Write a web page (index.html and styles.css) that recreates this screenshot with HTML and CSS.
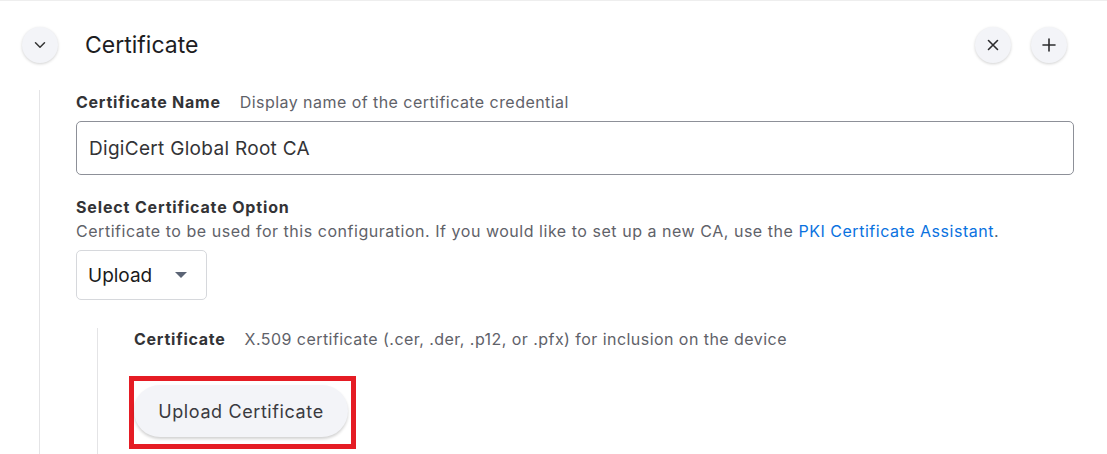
FILE: index.html
```html
<!DOCTYPE html>
<html lang="en">
<head>
<meta charset="utf-8">
<title>Certificate</title>
<link rel="stylesheet" href="styles.css">
</head>
<body>
<div class="page">
  <div class="header">
    <button class="circle-btn" aria-label="Collapse">
      <svg width="12" height="8" viewBox="0 0 12 8"><path d="M1.5 1.8 L6 6.2 L10.5 1.8" fill="none" stroke="#333" stroke-width="1.5" stroke-linecap="round" stroke-linejoin="round"/></svg>
    </button>
    <h1 class="title">Certificate</h1>
    <div class="actions">
      <button class="circle-btn" aria-label="Remove">
        <svg width="12" height="12" viewBox="0 0 12 12"><path d="M1.5 1.5 L10.5 10.5 M10.5 1.5 L1.5 10.5" fill="none" stroke="#2c2c2e" stroke-width="1.6" stroke-linecap="round"/></svg>
      </button>
      <button class="circle-btn" aria-label="Add">
        <svg width="14" height="14" viewBox="0 0 14 14"><path d="M7 1 V13 M1 7 H13" fill="none" stroke="#2c2c2e" stroke-width="1.6" stroke-linecap="round"/></svg>
      </button>
    </div>
  </div>
  <div class="body">
    <div class="field-head">
      <span class="label">Certificate Name</span>
      <span class="hint">Display name of the certificate credential</span>
    </div>
    <div class="text-input">DigiCert Global Root CA</div>

    <div class="label block-label">Select Certificate Option</div>
    <div class="desc">Certificate to be used for this configuration. If you would like to set up a new CA, use the <a href="#" class="link">PKI Certificate Assistant</a>.</div>
    <div class="select">
      <span class="select-value">Upload</span>
      <svg class="caret" width="12" height="6" viewBox="0 0 12 6"><path d="M0 0 H12 L6 6 Z" fill="#5b6475"/></svg>
    </div>

    <div class="nested">
      <div class="field-head">
        <span class="label">Certificate</span>
        <span class="hint">X.509 certificate (.cer, .der, .p12, or .pfx) for inclusion on the device</span>
      </div>
      <div class="highlight">
        <button class="pill-btn">Upload Certificate</button>
      </div>
    </div>
  </div>
</div>
</body>
</html>
```

FILE: styles.css
```css
* { box-sizing: border-box; }
html, body { margin: 0; padding: 0; background: #fff; }
body {
  font-family: Inter, "Open Sans", "Liberation Sans", sans-serif;
  color: #1d1d1f;
  height: 454px;
  overflow: hidden;
  border-top: 1px solid #eeeeee;
}
.page { width: 1107px; }
.header {
  display: flex;
  align-items: center;
  padding: 26px 40px 0 22px;
  height: 62px;
}
.circle-btn {
  width: 36px;
  height: 36px;
  border-radius: 50%;
  border: none;
  background: #f3f4f8;
  box-shadow: 0 1px 3px rgba(0,0,0,0.18);
  display: flex;
  align-items: center;
  justify-content: center;
  padding: 0;
  flex: none;
}
.title {
  margin: 0 0 0 27px;
  font-size: 23px;
  font-weight: 400;
  color: #1d1d1f;
  flex: 1;
  line-height: 30px;
}
.actions { display: flex; gap: 20px; }
.body {
  margin: 27px 0 0 39px;
  border-left: 1px solid #e4e4e6;
  padding: 2px 33px 0 36px;
}
.field-head { display: flex; align-items: baseline; gap: 19px; line-height: 20px; }
.label { font-size: 16px; font-weight: 700; color: #333336; letter-spacing: 0.75px; }
.hint { font-size: 16px; color: #5f6269; letter-spacing: 0.45px; }
.text-input {
  margin-top: 9px;
  height: 54px;
  border: 1px solid #8d9098;
  border-radius: 5px;
  padding: 0 12px;
  display: flex;
  align-items: center;
  font-size: 19px;
  color: #333336;
  letter-spacing: 0.3px;
}
.block-label { margin-top: 22px; line-height: 20px; letter-spacing: 0.85px; }
.desc { margin-top: 4px; font-size: 16px; line-height: 20px; color: #5f6269; letter-spacing: 0.53px; }
.link { color: #0a72e0; text-decoration: none; }
.select {
  margin-top: 9px;
  width: 131px;
  height: 50px;
  border: 1px solid #d6d8dc;
  border-radius: 5px;
  display: flex;
  align-items: center;
  padding: 0 0 0 11px;
  font-size: 19px;
  color: #1a1a1a;
}
.select-value { width: 87px; }
.caret { flex: none; }
.nested {
  margin: 28px 0 0 21px;
  border-left: 1px solid #e4e4e6;
  padding: 1px 0 20px 36px;
}
.field-head + .highlight { margin-top: 27px; }
.highlight {
  width: 227px;
  height: 73px;
  margin-left: -5px;
  border: 5px solid #e51c24;
  padding: 4px 0 0 0;
}
.pill-btn {
  width: 214px;
  height: 52px;
  border: none;
  border-radius: 26px;
  background: #f3f4f8;
  box-shadow: 0 2px 3px rgba(0,0,0,0.18);
  font-family: inherit;
  font-size: 18px;
  color: #3a3a3f;
  letter-spacing: 0.6px;
  padding: 0;
}
```
